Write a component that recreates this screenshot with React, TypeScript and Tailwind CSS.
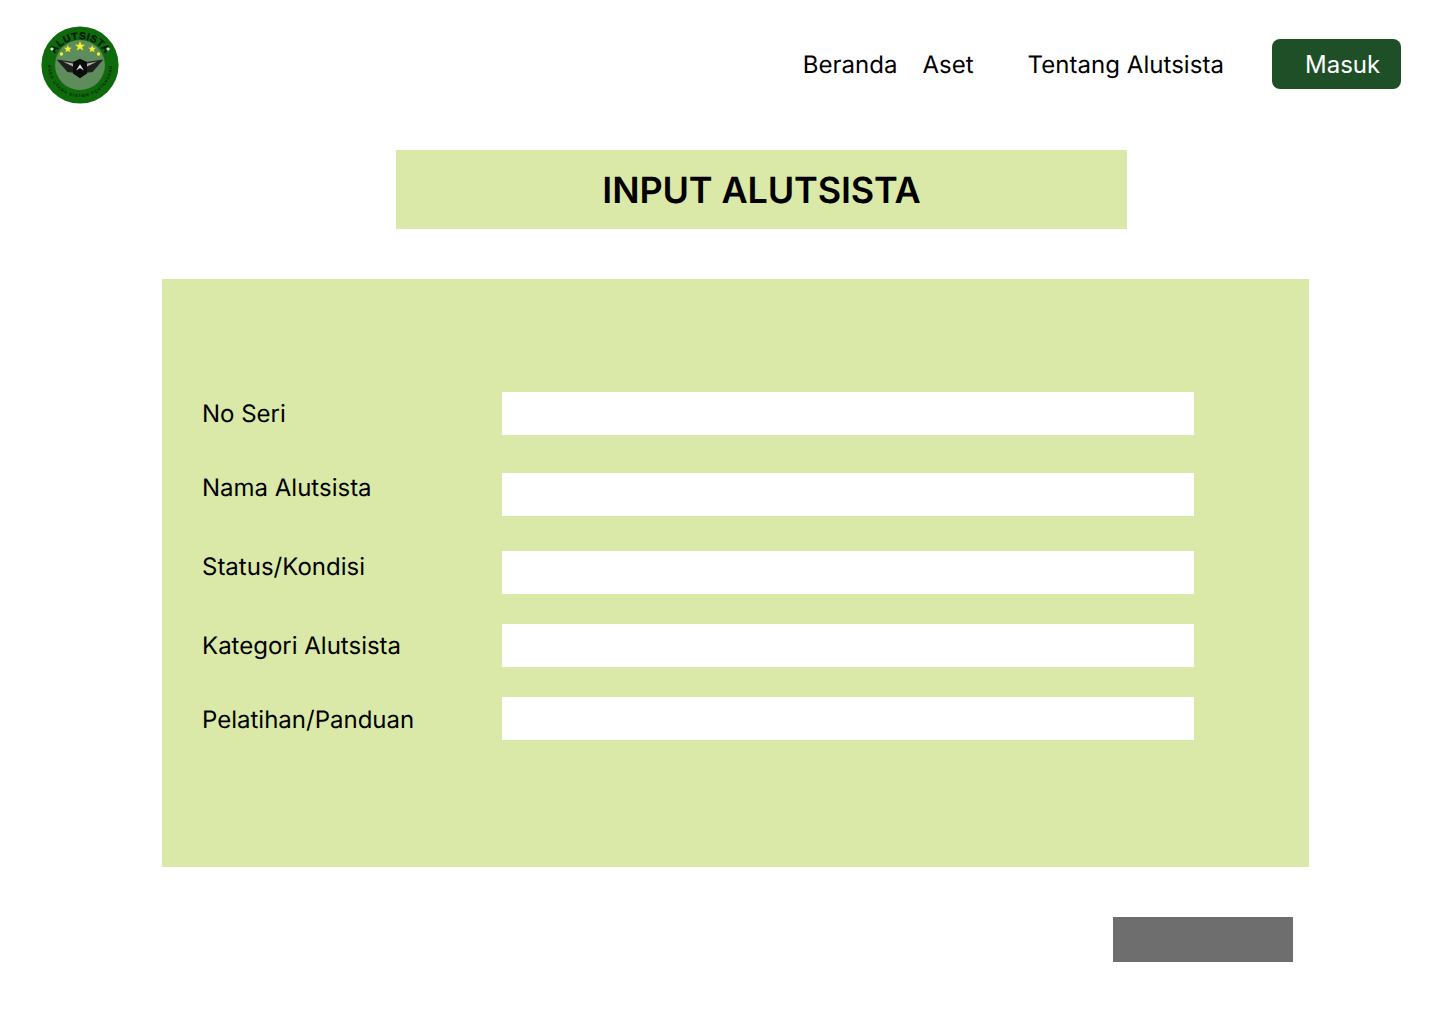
import React from "react";

const fields = [
  { label: "No Seri", rowClass: "mt-[113px]", labelClass: "" },
  { label: "Nama Alutsista", rowClass: "mt-[38px]", labelClass: "-translate-y-[7px]" },
  { label: "Status/Kondisi", rowClass: "mt-[35px]", labelClass: "-translate-y-[6px]" },
  { label: "Kategori Alutsista", rowClass: "mt-[30px]", labelClass: "" },
  { label: "Pelatihan/Panduan", rowClass: "mt-[30px]", labelClass: "translate-y-[1px]" },
];

const Logo = () => (
  <svg width="78" height="78" viewBox="0 0 100 100" className="block">
    <circle cx="50" cy="50" r="49.5" fill="#0e6a0a" />
    <circle cx="50" cy="50" r="32" fill="#5f8c5c" />
    <defs>
      <path id="logo-top" d="M 13 54 A 37 37 0 0 1 87 54" />
      <path id="logo-bottom" d="M 11.5 36 A 41 41 0 1 0 88.5 36" />
    </defs>
    <text fontFamily="Liberation Sans, sans-serif" fontSize="13" fontWeight="700" fill="#03190a" stroke="#03190a" strokeWidth="0.4" letterSpacing="0.7">
      <textPath href="#logo-top" startOffset="50%" textAnchor="middle">ALUTSISTA</textPath>
    </text>
    <text fontFamily="Liberation Sans, sans-serif" fontSize="5.2" fill="#06240c" stroke="#06240c" strokeWidth="0.15" letterSpacing="1.35">
      <textPath href="#logo-bottom" startOffset="50%" textAnchor="middle">AGEN UTAMA SISTEM PERTAHANAN</textPath>
    </text>
    <g fill="#f4f425">
      <polygon points="50,19.5 51.8,24 56.5,24 52.7,27 54.2,31.5 50,28.8 45.8,31.5 47.3,27 43.5,24 48.2,24" />
      <polygon points="34.4,24.5 35.8,28 39.4,28 36.5,30.2 37.6,33.7 34.4,31.6 31.2,33.7 32.3,30.2 29.4,28 33,28" />
      <polygon points="65.6,24.5 67,28 70.6,28 67.7,30.2 68.8,33.7 65.6,31.6 62.4,33.7 63.5,30.2 60.6,28 64.2,28" />
      <circle cx="26.2" cy="36" r="2.2" />
      <circle cx="73.8" cy="36" r="2.2" />
    </g>
    <g fill="#e8f0e4">
      <polygon points="14,26.5 15,28.5 17,29.5 15,30.5 14,32.5 13,30.5 11,29.5 13,28.5" />
      <polygon points="86,26.5 87,28.5 89,29.5 87,30.5 86,32.5 85,30.5 83,29.5 85,28.5" />
    </g>
    <polygon points="20,43 42,46 42,60 34,59" fill="#1d211e" />
    <polygon points="80,43 58,46 58,60 66,59" fill="#1d211e" />
    <polygon points="41,46 50,42 59,46 59,61 50,67 41,61" fill="#0c0c0c" />
    <polygon points="28,45.5 41,48 41,52" fill="#aab6a8" />
    <polygon points="72,45.5 59,48 59,52" fill="#aab6a8" />
    <path d="M45 57 L50 49 L55 57 L50 54 Z" fill="#e6e6e6" />
  </svg>
);

export default function App() {
  return (
    <div className="min-h-[1024px] bg-white text-black font-['Inter',sans-serif] [text-rendering:geometricPrecision]">
      <header className="flex h-[150px] items-start justify-between pl-[41px] pr-[39px] pt-[26px]">
        <Logo />
        <nav className="mt-[13px] flex h-[50px] items-center text-2xl">
          <a className="translate-y-[1px]">Beranda</a>
          <a className="ml-[25px] translate-y-[1px]">Aset</a>
          <a className="ml-[54px] translate-y-[1px] tracking-[0.05px]">Tentang Alutsista</a>
          <button className="ml-[48px] h-[50px] w-[129px] rounded-lg bg-[#1e4f27] pl-[33px] pt-[2px] text-left text-2xl text-white">
            Masuk
          </button>
        </nav>
      </header>

      <div className="ml-[396px] flex h-[79px] w-[731px] items-center justify-center bg-[#dae9a7]">
        <h1 className="text-4xl font-semibold tracking-[-0.13px]">INPUT ALUTSISTA</h1>
      </div>

      <form className="ml-[162px] mt-[50px] h-[588px] w-[1147px] overflow-hidden bg-[#dae9a7] pl-[40px]">
        {fields.map((f) => (
          <div key={f.label} className={`flex h-[43px] items-center ${f.rowClass}`}>
            <label className={`w-[300px] text-2xl ${f.labelClass}`}>{f.label}</label>
            <div className="h-[43px] w-[692px] bg-white" />
          </div>
        ))}
      </form>

      <div className="ml-[1113px] mt-[50px] h-[45px] w-[180px] bg-[#6e6e6e]" />
    </div>
  );
}
